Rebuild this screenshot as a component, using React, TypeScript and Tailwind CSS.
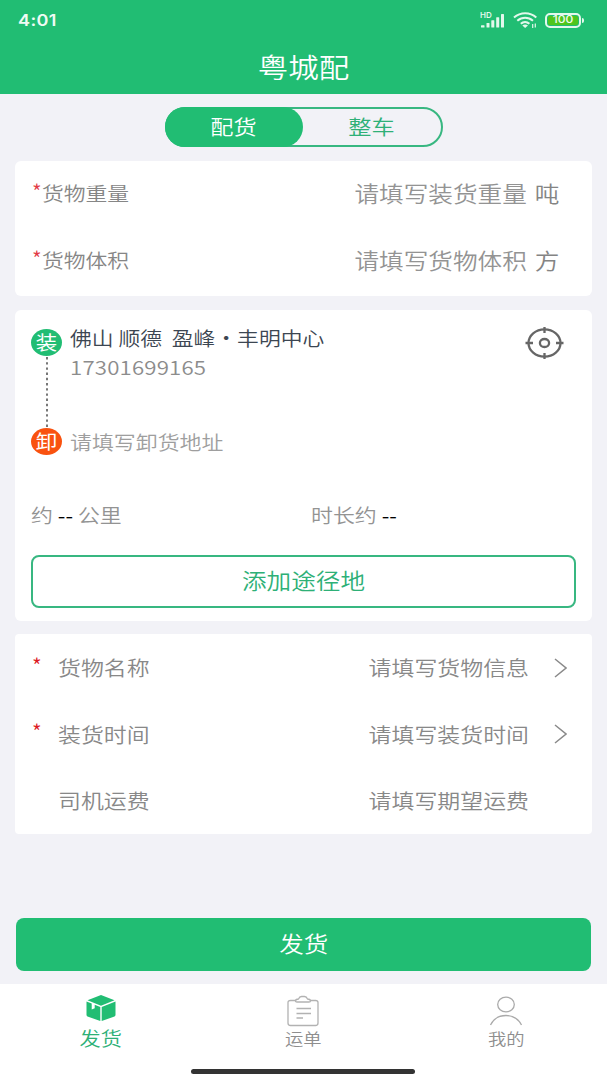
import { useState, type ReactNode } from "react";
import clsx from "clsx";

const INFO_ROWS = [
  { label: "货物名称", placeholder: "请填写货物信息", required: true, arrow: true },
  { label: "装货时间", placeholder: "请填写装货时间", required: true, arrow: true },
  { label: "司机运费", placeholder: "请填写期望运费", required: false, arrow: false },
];

const CARGO_ROWS = [
  { label: "货物重量", placeholder: "请填写装货重量", unit: "吨" },
  { label: "货物体积", placeholder: "请填写货物体积", unit: "方" },
];

// Wide text: every label on the screen is slightly extended
function Wide({ children, className }: { children: ReactNode; className?: string }) {
  return (
    <span
      className={clsx(
        "inline-block scale-x-[1.13] whitespace-nowrap leading-none",
        className ?? "origin-left",
      )}
    >
      {children}
    </span>
  );
}

function StatusBar() {
  return (
    <div className="flex h-10 items-center justify-between pr-[23px] pl-[18px] text-[#effbf4]">
      <span className="origin-left scale-x-[1.13] font-['Inter'] text-[16px] leading-none font-semibold tracking-[0.3px]">
        4:01
      </span>
      <div className="flex items-center">
        <svg width="25" height="18" viewBox="0 0 25 18" fill="#e3f8ec">
          <text x="0" y="7" fontSize="8" fontWeight="600" fontFamily="Inter, sans-serif">
            HD
          </text>
          <rect x="1" y="14.300" width="3.500" height="2.200" rx=".5" />
          <rect x="6.500" y="12" width="3" height="4.500" rx=".5" />
          <rect x="11.300" y="9.200" width="3" height="7.300" rx=".5" />
          <rect x="16.200" y="6.300" width="3" height="10.200" rx=".5" />
          <rect x="21" y="3" width="3" height="13.500" rx=".5" />
        </svg>
        <svg className="ml-2" width="25" height="18" viewBox="0 0 25 18" fill="none" stroke="#e3f8ec" strokeWidth="2">
          <path d="M1 6.500C7.500.7 17 .7 23.300 6.500M4.300 9.700c4.700-4.100 11-4.100 15.700 0M7.800 12.800c2.500-2.300 6-2.300 8.600 0" />
          <path d="M9.300 14.500c1.700-1.400 4-1.400 5.700 0l-2.900 2.600z" fill="#e3f8ec" stroke="none" />
          <path d="M19.700 13v4M22.300 12.500v4" strokeWidth="1.2" />
        </svg>
        <div className="ml-[7px] flex items-center">
          <div className="flex h-[15px] w-[36px] items-center justify-center rounded-[5px] border-2 border-[#e3f8ec] p-px">
            <div className="flex h-full w-full items-center justify-center rounded-[2px] bg-[#4fc51c]">
              <span className="scale-x-[1.15] pt-px font-['Inter'] text-[10.5px] leading-none font-medium">100</span>
            </div>
          </div>
          <div className="ml-px h-[5px] w-[2px] rounded-r bg-[#e3f8ec]" />
        </div>
      </div>
    </div>
  );
}

function ModeSwitch() {
  const [mode, setMode] = useState("配货");
  return (
    <div className="mx-auto mt-[13px] flex h-10 w-[278px] rounded-full border-2 border-[#38b781]">
      {["配货", "整车"].map((m) => (
        <button
          key={m}
          onClick={() => setMode(m)}
          className={clsx(
            "-my-[2px] flex items-center justify-center rounded-full pb-px text-[20.5px] first:-ml-[2px]",
            mode === m ? "w-[139px] bg-[#21bd73] text-white" : "w-[139px] text-[#2eb077]",
          )}
        >
          <Wide className="origin-center">{m}</Wide>
        </button>
      ))}
    </div>
  );
}

function CargoCard() {
  return (
    <section className="mx-[15px] mt-[14px] h-[135px] rounded-md bg-white">
      {CARGO_ROWS.map((row) => (
        <div key={row.label} className="flex h-[67.5px] items-center justify-between pr-[33px] pb-px pl-[17px]">
          <div className="flex items-center pb-[2px] text-[19.3px] text-[#868686]">
            <span className="w-[10px] pb-1 text-[21px] leading-none text-[#e23b45]">*</span>
            <Wide>{row.label}</Wide>
          </div>
          <div className="pb-[3px] text-[21.8px] leading-none">
            <Wide className="origin-right">
              <span className="text-[#939393]">{row.placeholder}</span>
              <span className="ml-[7px] text-[#848484]">{row.unit}</span>
            </Wide>
          </div>
        </div>
      ))}
    </section>
  );
}

function Badge({ children, className }: { children: ReactNode; className: string }) {
  return (
    <span
      className={clsx(
        "flex h-[27px] w-[31px] shrink-0 items-center justify-center rounded-[50%] pb-[2px] text-[19px] font-normal text-white",
        className,
      )}
    >
      <Wide className="origin-center">{children}</Wide>
    </span>
  );
}

function RouteCard() {
  return (
    <section className="mx-[15px] mt-[14px] flex h-[311px] flex-col rounded-md bg-white px-4">
      <div className="flex pt-[19px]">
        <div className="flex w-[31px] flex-col items-center">
          <Badge className="bg-[#21bd73]">装</Badge>
          <svg width="2" height="72" className="shrink-0">
            <path d="M1 1v71" stroke="#777" strokeWidth="2" strokeDasharray="2.4 2.8" />
          </svg>
          <Badge className="bg-[#f9520f]">卸</Badge>
        </div>
        <div className="ml-2 flex flex-1 flex-col text-[19.4px]">
          <div className="flex h-5 items-center pb-px text-[19.3px] text-[#3c4652]">
            <Wide>佛山 顺德&nbsp; 盈峰・丰明中心</Wide>
          </div>
          <div className="mt-2 flex h-5 items-center text-[19.7px] tracking-[0.15px] text-[#8c8c8c]">
            <Wide>17301699165</Wide>
          </div>
          <div className="mt-[55px] flex h-5 items-center text-[#9e9e9e]">
            <Wide>请填写卸货地址</Wide>
          </div>
        </div>
        <svg
          className="mt-[-3px] mr-3"
          width="39"
          height="34"
          viewBox="0 0 39 34"
          fill="none"
          stroke="#666"
          strokeWidth="2.3"
        >
          <ellipse cx="19.5" cy="17" rx="16" ry="13.7" />
          <ellipse cx="19.5" cy="17" rx="4.6" ry="4" />
          <path d="M19.500 1v6M19.500 27v6M.5 17h7.500M31 17h7.500" />
        </svg>
      </div>

      <div className="mt-[48px] flex h-6 items-center text-[19.4px] text-[#939393]">
        <div className="w-[280px]">
          <Wide>
            约 <span className="font-normal text-black">--</span> 公里
          </Wide>
        </div>
        <Wide>
          时长约 <span className="font-normal text-black">--</span>
        </Wide>
      </div>

      <button className="mt-[28px] flex h-[53px] w-full items-center justify-center rounded-lg border-2 border-[#38b781] pb-[3px] text-[21.8px] text-[#2eb077]">
        <Wide className="origin-center">添加途径地</Wide>
      </button>
    </section>
  );
}

function InfoCard() {
  return (
    <section className="mx-[15px] mt-[13px] h-[200px] rounded-[4px] bg-white">
      {INFO_ROWS.map((row) => (
        <div key={row.label} className="flex h-[66.5px] items-center pl-[17px] text-[20.3px] text-[#888]">
          <span className="w-[26px] pb-1 text-[21px] leading-none text-[#dc1a22]">{row.required && "*"}</span>
          <Wide>{row.label}</Wide>
          <div className="ml-auto flex items-center">
            <Wide className="origin-right">{row.placeholder}</Wide>
            <span className="flex w-[63px] pt-px pl-[25px]">
              {row.arrow && (
                <svg width="13" height="20" viewBox="0 0 13 20" fill="none" stroke="#8a8a8a" strokeWidth="1.5">
                  <path d="M1 1l11 9-11 9" />
                </svg>
              )}
            </span>
          </div>
        </div>
      ))}
    </section>
  );
}

function TabBar() {
  return (
    <nav className="mt-[13px] grid h-[96px] shrink-0 grid-cols-3 bg-white text-[16.2px] text-[#8e8e8e]">
      <div className="flex flex-col items-center pt-[10px] text-[18.8px] text-[#2eb077]">
        <svg width="30" height="28" viewBox="0 0 30 28" fill="#21bd73">
          <path d="M15 1L28.500 6.300 15 11.700 1.500 6.300z" />
          <path d="M.5 7.500L5.700 9.600v5.900l3-1.300V10.800L14.300 13v14L1.500 22.400Q.5 22 .5 21z" />
          <path d="M29.500 7.500V21q0 1-1 1.400L15.700 27V13z" />
        </svg>
        <div className="mt-[6px] flex h-5 items-center">
          <Wide className="origin-center">发货</Wide>
        </div>
      </div>
      <div className="flex flex-col items-center pt-[11px]">
        <svg width="32" height="32" viewBox="0 0 32 32" fill="none" stroke="#b2b2b2" strokeWidth="1.3">
          <path d="M8.500 5.500H3.500Q1 5.500 1 7.500v20.500q0 2.500 2.500 2.500h25q2.500 0 2.500-2.500V7.500q0-2-2.500-2h-5" />
          <path d="M11.500 4Q12.500 1.500 14.500 1.500h3q2 0 3 2.500 3 .3 3 2 0 1-1.500 1H10q-1.500 0-1.500-1 0-1.700 3-2z" />
          <path d="M9.500 13.500h14.500M9.500 18.500h14.500M9.500 23h6.500" />
        </svg>
        <div className="mt-px flex h-5 items-center">
          <Wide className="origin-center">运单</Wide>
        </div>
      </div>
      <div className="flex flex-col items-center pt-[11px]">
        <svg width="34" height="32" viewBox="0 0 34 32" fill="none" stroke="#aaa" strokeWidth="1.3">
          <ellipse cx="17" cy="9.500" rx="8.300" ry="7.300" />
          <path d="M1.500 30C8 17.300 26 17.300 32.500 30" />
        </svg>
        <div className="mt-px flex h-5 items-center">
          <Wide className="origin-center">我的</Wide>
        </div>
      </div>
    </nav>
  );
}

export default function App() {
  return (
    <div className="relative flex h-[1080px] w-[607px] flex-col overflow-hidden bg-[#f2f2f7] font-['Noto_Sans_CJK_SC',sans-serif] font-[350]">
      <header className="h-[94px] shrink-0 bg-[#21bd73] text-white">
        <StatusBar />
        <h1 className="flex h-[54px] items-center justify-center pb-[2px] text-[27px] font-[350]">
          <Wide className="origin-center">粤城配</Wide>
        </h1>
      </header>

      <ModeSwitch />
      <CargoCard />
      <RouteCard />
      <InfoCard />

      <button className="mx-4 mt-auto flex h-[53px] shrink-0 items-center justify-center rounded-lg bg-[#21bd73] pb-[3px] text-[21.7px] text-white">
        <Wide className="origin-center">发货</Wide>
      </button>
      <TabBar />

      {/* system gesture bar */}
      <div className="absolute bottom-[6px] left-[191px] h-[5px] w-[224px] rounded-full bg-[#333]" />
    </div>
  );
}
